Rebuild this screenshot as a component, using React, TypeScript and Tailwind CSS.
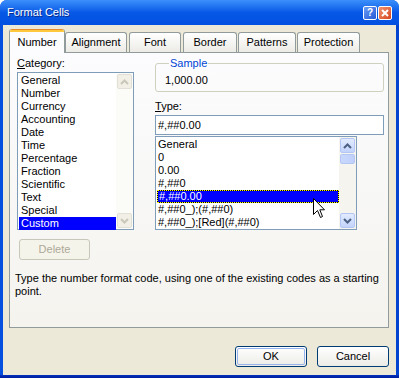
import React from "react";

function Chevron({ up, color }: { up: boolean; color: string }) {
  return (
    <svg width="9" height="6" viewBox="0 0 9 6">
      {up ? (
        <path d="M1 5 L4.5 1.5 L8 5" fill="none" stroke={color} strokeWidth="2" />
      ) : (
        <path d="M1 1 L4.5 4.5 L8 1" fill="none" stroke={color} strokeWidth="2" />
      )}
    </svg>
  );
}

function ScrollBar({ disabled, thumb }: { disabled?: boolean; thumb?: boolean }) {
  const btn = disabled
    ? "border border-[#e2e0d6] bg-[#f1efe6] rounded-[2px]"
    : "border border-[#b4c7f4] bg-gradient-to-b from-[#e2ebfe] to-[#c2d3fb] rounded-[2px]";
  const arrow = disabled ? "#c9c7ba" : "#4d6185";
  return (
    <div className={"w-[17px] h-full flex flex-col justify-between p-[1px] " + (disabled ? "bg-[#fbfbf8]" : "bg-[#f5f4ee]")}>
      <div className="flex flex-col gap-[1px]">
        <div className={"h-[15px] w-[15px] flex items-center justify-center " + btn}>
          <Chevron up color={arrow} />
        </div>
        {thumb && (
          <div className="h-[10px] w-[15px] border border-[#b4c7f4] bg-gradient-to-r from-[#c9d8fc] to-[#bfd0fb] rounded-[2px]" />
        )}
      </div>
      <div className={"h-[15px] w-[15px] flex items-center justify-center " + btn}>
        <Chevron up={false} color={arrow} />
      </div>
    </div>
  );
}

export default function App() {
  const categories = [
    "General",
    "Number",
    "Currency",
    "Accounting",
    "Date",
    "Time",
    "Percentage",
    "Fraction",
    "Scientific",
    "Text",
    "Special",
    "Custom",
  ];
  const types = [
    "General",
    "0",
    "0.00",
    "#,##0",
    "#,##0.00",
    "#,##0_);(#,##0)",
    "#,##0_);[Red](#,##0)",
  ];
  const tabs = [
    { name: "Alignment", w: "w-[62px]", ml: "ml-0" },
    { name: "Font", w: "w-[52px]", ml: "ml-[2px]" },
    { name: "Border", w: "w-[54px]", ml: "ml-[2px]" },
    { name: "Patterns", w: "w-[58px]", ml: "ml-[1px]" },
    { name: "Protection", w: "w-[63px]", ml: "ml-[1px]" },
  ];

  return (
    <div className="w-[399px] h-[378px] bg-white font-['Liberation_Sans',Arial,sans-serif] text-[11px] leading-[13px] text-black">
      <div className="w-full h-full flex flex-col rounded-t-[7px] overflow-hidden bg-[#0a53e4]">
        {/* Title bar */}
        <div className="h-[25px] shrink-0 flex items-center pl-[7px] pr-[7px] bg-gradient-to-b from-[#3c8ffb] via-[#0758e6] to-[#0350e0]">
          <div className="flex-1 text-white text-[11px] [text-shadow:1px_1px_0_#0a2a8a]">Format Cells</div>
          <div className="flex gap-[1px] items-center">
            <div className="w-[14px] h-[14px] rounded-[2px] border border-white bg-gradient-to-br from-[#6a9cf5] to-[#2457d6] flex items-center justify-center text-white font-bold text-[10px] leading-none">
              ?
            </div>
            <div className="w-[14px] h-[14px] rounded-[2px] border border-white bg-gradient-to-br from-[#f0916c] to-[#d5431c] flex items-center justify-center">
              <svg width="8" height="8" viewBox="0 0 8 8">
                <path d="M1 1 L7 7 M7 1 L1 7" stroke="white" strokeWidth="2" />
              </svg>
            </div>
          </div>
        </div>

        {/* Frame sides */}
        <div className="flex-1 flex flex-col px-[3px] bg-gradient-to-r from-[#0650e0] to-[#0244d0]">
          <div className="flex-1 flex flex-col bg-[#ece9d8] pl-[6px] pr-[7px] pt-[4px] pb-[8px]">
            {/* Tabs */}
            <div className="h-[23px] flex items-end shrink-0">
              <div className="relative z-10 w-[56px] h-[24px] -mb-[1px] flex flex-col border-x border-[#919b9c] bg-[#fcfcfe] rounded-t-[3px] overflow-hidden">
                <div className="h-[1px] bg-[#e68b2c]" />
                <div className="h-[2px] bg-[#ffc73c]" />
                <div className="flex-1 flex items-center justify-center pb-[1px]">Number</div>
              </div>
              {tabs.map((t) => (
                <div
                  key={t.name}
                  className={
                    "h-[20px] flex items-center justify-center border-t border-x border-[#919b9c] rounded-t-[3px] bg-gradient-to-b from-white to-[#ecebe6] " +
                    t.w +
                    " " +
                    t.ml
                  }
                >
                  {t.name}
                </div>
              ))}
            </div>

            {/* Pane */}
            <div className="h-[276px] shrink-0 border border-[#919b9c] bg-gradient-to-b from-[#fcfcfe] to-[#f4f3ee] pt-[4px] pl-[4px] flex flex-col">
              <div className="flex ml-[3px] gap-[21px]">
                {/* Left column */}
                <div className="w-[117px] flex flex-col">
                  <div>
                    <span className="underline">C</span>ategory:
                  </div>
                  <div className="mt-[2px] h-[158px] border border-[#7f9db9] bg-white flex">
                    <div className="flex-1 flex flex-col pt-[1px]">
                      {categories.map((c) => (
                        <div
                          key={c}
                          className={
                            "h-[13px] pl-[2px] ml-[1px] " +
                            (c === "Custom" ? "bg-[#0000ff] text-white" : "")
                          }
                        >
                          {c}
                        </div>
                      ))}
                    </div>
                    <ScrollBar disabled />
                  </div>
                  <div className="mt-[9px] ml-[2px] w-[71px] h-[21px] border border-[#c9c7ba] rounded-[3px] flex items-center justify-center text-[#aca899] bg-[#f5f4ea]">
                    Delete
                  </div>
                </div>

                {/* Right column */}
                <div className="w-[229px] flex flex-col">
                  <fieldset className="border border-[#d0d0bf] rounded-[3px] pl-[9px] pb-[4px]">
                    <legend className="ml-[4px] px-[1px] text-[#0046d5]">Sample</legend>
                    <div className="mt-[4px]">1,000.00</div>
                  </fieldset>
                  <div className="mt-[8px]">
                    <span className="underline">T</span>ype:
                  </div>
                  <div className="mt-[2px] h-[20px] border border-[#7f9db9] bg-white flex items-center pl-[2px]">
                    #,##0.00
                  </div>
                  <div className="relative mt-[1px] w-[202px] h-[94px] border border-[#7f9db9] bg-white flex">
                    <div className="flex-1 flex flex-col pt-[1px]">
                      {types.map((t) =>
                        t === "#,##0.00" ? (
                          <div key={t} className="h-[13px] ml-[1px] bg-black">
                            <div className="h-[13px] border border-dotted border-[#ffff00] bg-[#0000ff] bg-clip-padding text-white pl-[1px] leading-[11px]">
                              {t}
                            </div>
                          </div>
                        ) : (
                          <div key={t} className="h-[13px] pl-[2px]">
                            {t}
                          </div>
                        )
                      )}
                    </div>
                    <ScrollBar thumb />
                    <svg
                      className="absolute left-[157px] top-[61px]"
                      width="13"
                      height="21"
                      viewBox="0 0 13 21"
                    >
                      <path
                        d="M0.5 0.5 L0.5 16.5 L4.5 12.5 L7.5 19.5 L9.5 18.5 L6.8 11.8 L11.5 11.8 Z"
                        fill="white"
                        stroke="black"
                        strokeWidth="1"
                        strokeLinejoin="miter"
                      />
                    </svg>
                  </div>
                </div>
              </div>

              <div className="mt-[12px] ml-[1px] whitespace-nowrap">
                Type the number format code, using one of the existing codes as a starting
                <br />
                point.
              </div>
            </div>

            {/* Buttons */}
            <div className="mt-[18px] flex justify-end gap-[10px]">
              <div className="w-[72px] h-[21px] rounded-[3px] border border-[#003c74] bg-gradient-to-b from-white to-[#ecebe6] p-[1px]">
                <div className="w-full h-full rounded-[2px] border border-[#98b4ee] flex items-center justify-center">
                  OK
                </div>
              </div>
              <div className="w-[72px] h-[21px] rounded-[3px] border border-[#003c74] bg-gradient-to-b from-white to-[#ecebe6] flex items-center justify-center">
                Cancel
              </div>
            </div>
          </div>
        </div>
        <div className="h-[3px] shrink-0 bg-gradient-to-b from-[#0233c0] to-[#001a9a]" />
      </div>
    </div>
  );
}
